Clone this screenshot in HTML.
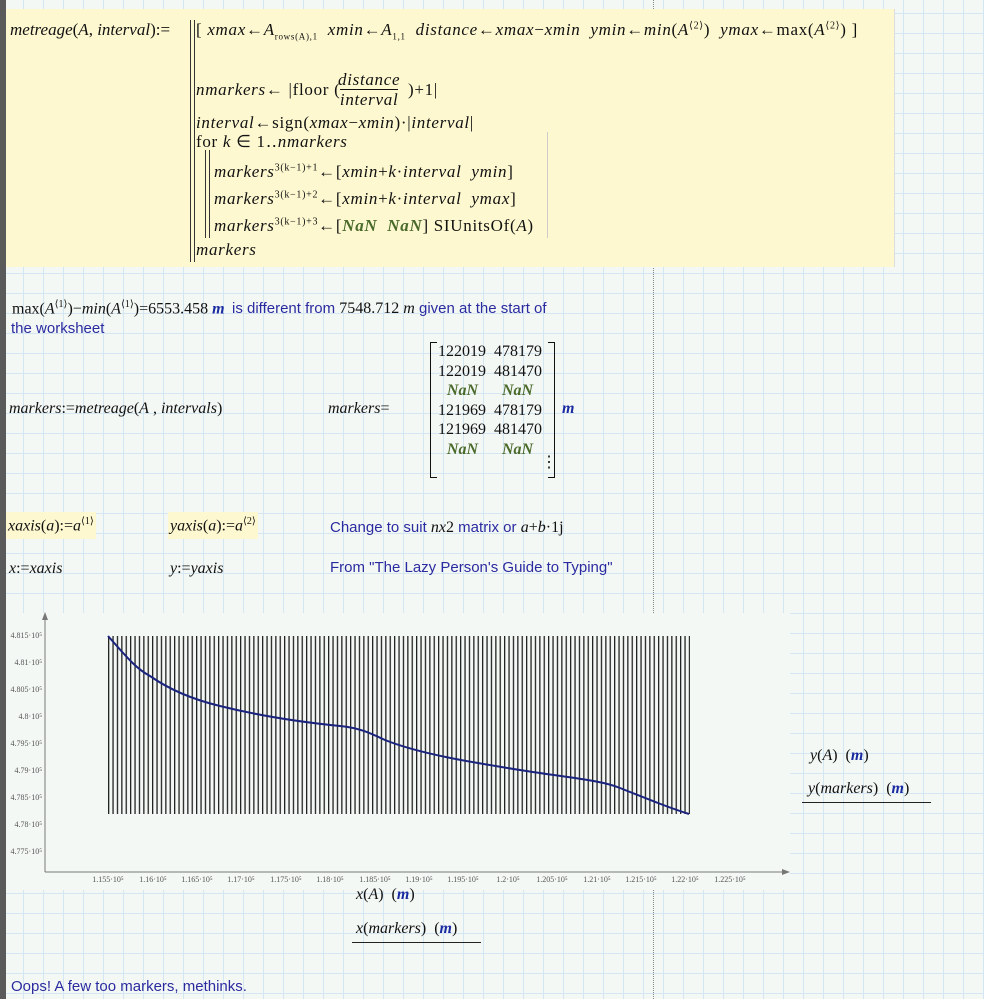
<!DOCTYPE html>
<html><head><meta charset="utf-8"><style>
body{margin:0;width:984px;height:999px;overflow:hidden;position:relative;background-color:#f4f8f5;
background-image:linear-gradient(to right,#d5e6f3 1px,transparent 1px),linear-gradient(to bottom,#d5e6f3 1px,transparent 1px);
background-size:20px 20px;background-position:3px 13px;font-family:"Liberation Serif",serif;}
.a{position:absolute;white-space:nowrap;}
.m{font-family:"Liberation Serif",serif;font-size:16px;color:#111;}
.w{font-size:17px;letter-spacing:0.7px}
i{font-style:italic}
.t{font-family:"Liberation Sans",sans-serif;font-size:15px;color:#2b2ba0;}
.g{color:#4a6a2a;font-weight:bold;font-style:italic}
.u{color:#1a2aa0;font-weight:bold;font-style:italic}
sup{font-size:10px}
</style></head><body>
<div class="a" style="left:0;top:0;width:6px;height:999px;background:#5a5a5a"></div>
<div class="a" style="left:653px;top:0;height:999px;border-left:1px dotted #888"></div>
<div class="a" style="left:6px;top:9px;width:888px;height:258px;background:#fdf8d0;border-right:1px solid #ddd"></div>
<div class="a" style="left:190px;top:20px;width:3px;height:242px;border-left:1px solid #333;border-right:1px solid #333"></div>
<div class="a" style="left:205px;top:150px;width:3px;height:88px;border-left:1px solid #333;border-right:1px solid #333"></div>
<div class="a" style="left:547px;top:132px;height:106px;border-left:1px solid #ccc"></div>
<div class="a m" style="left:10px;top:20px;font-size:17px"><i>metreage</i>(<i>A</i>, <i>interval</i>):=</div>
<div class="a m w" style="left:196px;top:20px">[ <i>xmax</i>←<i>A</i><sub style="font-size:9px">rows(A),1</sub> &nbsp;<i>xmin</i>←<i>A</i><sub style="font-size:9px">1,1</sub> &nbsp;<i>distance</i>←<i>xmax</i>−<i>xmin</i> &nbsp;<i>ymin</i>←<i>min</i>(<i>A</i><sup>⟨2⟩</sup>) &nbsp;<i>ymax</i>←max(<i>A</i><sup>⟨2⟩</sup>) ]</div>
<div class="a m w" style="left:196px;top:80px"><i>nmarkers</i>← |floor (</div>
<div class="a m w" style="left:338px;top:70px;text-align:center;line-height:20px"><i>distance</i><br><span style="border-top:1px solid #111"><i>interval</i></span></div>
<div class="a m w" style="left:408px;top:80px">)+1|</div>
<div class="a m w" style="left:196px;top:113px"><i>interval</i>←sign(<i>xmax</i>−<i>xmin</i>)·|<i>interval</i>|</div>
<div class="a m w" style="left:196px;top:132px">for <i>k</i> ∈ 1‥<i>nmarkers</i></div>
<div class="a m w" style="left:214px;top:162px"><i>markers</i><sup>3(k−1)+1</sup>←[<i>xmin</i>+<i>k</i>·<i>interval</i> &nbsp;<i>ymin</i>]</div>
<div class="a m w" style="left:214px;top:189px"><i>markers</i><sup>3(k−1)+2</sup>←[<i>xmin</i>+<i>k</i>·<i>interval</i> &nbsp;<i>ymax</i>]</div>
<div class="a m w" style="left:214px;top:216px"><i>markers</i><sup>3(k−1)+3</sup>←[<span class="g">NaN &nbsp;NaN</span>] SIUnitsOf(<i>A</i>)</div>
<div class="a m w" style="left:196px;top:240px"><i>markers</i></div>

<div class="a m" style="left:12px;top:299px">max(<i>A</i><sup>⟨1⟩</sup>)−<i>min</i>(<i>A</i><sup>⟨1⟩</sup>)=6553.458 <span class="u">m</span></div>
<div class="a t" style="left:232px;top:300px">is different from <span class="m">7548.712 <i>m</i></span> given at the start of</div>
<div class="a t" style="left:11px;top:320px">the worksheet</div>

<div class="a m" style="left:9px;top:400px"><i>markers</i>:=<i>metreage</i>(<i>A</i> , <i>intervals</i>)</div>
<div class="a m" style="left:328px;top:400px"><i>markers</i>=</div>
<div class="a" style="left:430px;top:342px;width:6px;height:134px;border:1px solid #111;border-right:none"></div>
<div class="a" style="left:548px;top:342px;width:6px;height:134px;border:1px solid #111;border-left:none"></div>
<div class="a m" style="left:438px;top:342px;line-height:19.5px;text-align:center">122019&nbsp; 478179<br>122019&nbsp; 481470<br><span class="g">NaN &nbsp; &nbsp; &nbsp;NaN</span><br>121969&nbsp; 478179<br>121969&nbsp; 481470<br><span class="g">NaN &nbsp; &nbsp; &nbsp;NaN</span></div>
<div class="a m" style="left:541px;top:452px">⋮</div>
<div class="a m u" style="left:562px;top:400px">m</div>

<div class="a m" style="left:6px;top:512px;background:#fdf8d0;padding:4px 2px"><i>xaxis</i>(<i>a</i>):=<i>a</i><sup>⟨1⟩</sup></div>
<div class="a m" style="left:168px;top:512px;background:#fdf8d0;padding:4px 2px"><i>yaxis</i>(<i>a</i>):=<i>a</i><sup>⟨2⟩</sup></div>
<div class="a t" style="left:330px;top:519px">Change to suit <span class="m"><i>nx</i>2</span> matrix or <span class="m"><i>a</i>+<i>b</i>·1j</span></div>
<div class="a m" style="left:9px;top:560px"><i>x</i>:=<i>xaxis</i></div>
<div class="a m" style="left:170px;top:560px"><i>y</i>:=<i>yaxis</i></div>
<div class="a t" style="left:330px;top:559px">From "The Lazy Person's Guide to Typing"</div>

<svg class="a" style="left:0;top:600px" width="984" height="300">
<defs><pattern id="p" x="108" y="0" width="4.4" height="10" patternUnits="userSpaceOnUse"><rect x="0" y="0" width="1.3" height="10" fill="#222"/></pattern></defs>
<rect x="6" y="13" width="784" height="277" fill="#f4f8f5"/>
<line x1="45" y1="18" x2="45" y2="272" stroke="#777"/>
<line x1="45" y1="272" x2="785" y2="272" stroke="#777"/>
<polygon points="45,12 42,20 48,20" fill="#777"/>
<polygon points="790,272 782,269 782,275" fill="#777"/>
<rect x="108" y="36" width="582" height="178" fill="url(#p)"/>
<path d="M108,36 C125,55 135,68 150,76 C170,90 195,100 220,106 C260,116 300,122 340,126 C360,128 370,133 385,140 C420,154 470,162 520,170 C570,178 600,180 620,188 C650,200 670,208 689,214" fill="none" stroke="#1a237e" stroke-width="2"/>
<g font-size="8" fill="#555" text-anchor="end" font-family="Liberation Serif">
<text x="42" y="38">4.815·10⁵</text><text x="42" y="65">4.81·10⁵</text><text x="42" y="92">4.805·10⁵</text><text x="42" y="119">4.8·10⁵</text><text x="42" y="146">4.795·10⁵</text><text x="42" y="173">4.79·10⁵</text><text x="42" y="200">4.785·10⁵</text><text x="42" y="227">4.78·10⁵</text><text x="42" y="254">4.775·10⁵</text>
</g>
<g font-size="8" fill="#555" text-anchor="middle" font-family="Liberation Serif">
<text x="108" y="282">1.155·10⁵</text><text x="153" y="282">1.16·10⁵</text><text x="197" y="282">1.165·10⁵</text><text x="241" y="282">1.17·10⁵</text><text x="286" y="282">1.175·10⁵</text><text x="330" y="282">1.18·10⁵</text><text x="375" y="282">1.185·10⁵</text><text x="419" y="282">1.19·10⁵</text><text x="463" y="282">1.195·10⁵</text><text x="508" y="282">1.2·10⁵</text><text x="552" y="282">1.205·10⁵</text><text x="597" y="282">1.21·10⁵</text><text x="641" y="282">1.215·10⁵</text><text x="685" y="282">1.22·10⁵</text><text x="730" y="282">1.225·10⁵</text>
</g>
</svg>
<div class="a m" style="left:356px;top:886px"><i>x</i>(<i>A</i>) &nbsp;(<span class="u">m</span>)</div>
<div class="a m" style="left:352px;top:920px;border-bottom:1px solid #222;padding:0 24px 4px 4px"><i>x</i>(<i>markers</i>) &nbsp;(<span class="u">m</span>)</div>
<div class="a m" style="left:810px;top:747px"><i>y</i>(<i>A</i>) &nbsp;(<span class="u">m</span>)</div>
<div class="a m" style="left:802px;top:780px;border-bottom:1px solid #222;padding:0 22px 4px 6px"><i>y</i>(<i>markers</i>) &nbsp;(<span class="u">m</span>)</div>
<div class="a t" style="left:11px;top:978px">Oops! A few too markers, methinks.</div>
</body></html>
